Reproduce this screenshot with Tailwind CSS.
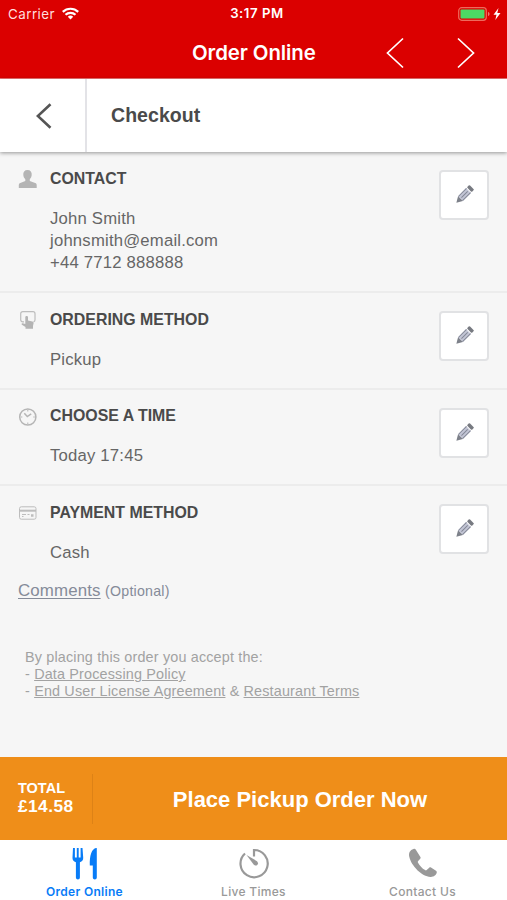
<!DOCTYPE html>
<html lang="en">
<head>
<meta charset="utf-8">
<title>Checkout</title>
<script src="https://cdn.jsdelivr.net/npm/@tailwindcss/browser@4"></script>
</head>
<body class="w-[507px] h-[900px] overflow-hidden bg-[#f6f6f6] font-['Liberation_Sans',Arial,sans-serif] text-[#666] whitespace-nowrap">
<svg class="hidden">
  <symbol id="pencil" viewBox="0 0 20 20">
    <g transform="rotate(45 10 10)">
      <rect x="6.6" y="-1" width="6.8" height="3.6" rx="1" fill="#777a81"/>
      <path d="M6.6 3.6h6.800v11.400H6.600z" fill="#c3c6d6"/>
      <path d="M7.100 3.600v11.400M12.900 3.600v11.400M10 4.800v8.800" stroke="#858997" stroke-width="1" fill="none"/>
      <path d="M6.600 15h6.800L10 20.800z" fill="#7d818a"/>
    </g>
  </symbol>
</svg>
<div class="flex flex-col h-[900px]">
  <header class="h-[79px] bg-[#db0000] text-white font-[Inter,sans-serif] border-b border-[#ef7272] shrink-0">
    <div class="h-[27px] grid grid-cols-3 items-center px-[8px] text-[13px]">
      <div class="flex items-center gap-[7px] text-[#ffdede]"><span class="text-[13.4px] tracking-[0.450px] pt-[1px]">Carrier</span>
        <svg width="17" height="13" viewBox="0 0 17 13" fill="none" stroke="#fff" stroke-width="2.2"><path d="M.8 4.900a11 11 0 0 1 15.400 0M3.500 7.800a7.200 7.200 0 0 1 10 0"/><path d="M8.500 12.500L5.800 9.700a4 4 0 0 1 5.400 0z" fill="#fff" stroke="none"/></svg>
      </div>
      <div class="text-center font-semibold text-[13.200px] tracking-[0.550px] pl-[7px] pt-[1px]">3:17 PM</div>
      <div class="flex justify-end items-center -mr-[3px]">
        <svg width="44" height="16" viewBox="0 0 44 16"><rect x=".7" y="1.700" width="27.600" height="12.600" rx="3" fill="none" stroke="#ee6a5c" stroke-width="1.200"/><rect x="2.500" y="3.500" width="24" height="9" rx="1" fill="#4cd964"/><path d="M30 6c2 .5 2 3.500 0 4z" fill="#ee7777"/><path d="M40.500 2L35.500 8.700h3l-1.200 5.300 5.200-7.100h-3.200z" fill="#fff"/></svg>
      </div>
    </div>
    <div class="h-[51px] flex items-center">
      <h1 class="ml-[192px] w-[194px] text-[20.400px] font-semibold tracking-[-0.080px] pt-[1px]">Order Online</h1>
      <svg width="90" height="32" viewBox="0 0 90 32" fill="none" stroke="#fff" stroke-width="1.700"><path d="M17 1.500L1.500 16 17 30.500M72 1.500L87.500 16 72 30.500"/></svg>
    </div>
  </header>

  <div class="h-[73px] bg-white flex items-center shadow-[0_1px_4px_rgba(0,0,0,.4)] shrink-0">
    <div class="w-[87px] h-full border-r-2 border-[#e3e3e7] flex items-center pl-[36px]">
      <svg width="16" height="26" viewBox="0 0 16 26" fill="none" stroke="#555" stroke-width="2.600"><path d="M14.500 1.200L1.800 13l12.700 11.800"/></svg>
    </div>
    <h2 class="pl-[24px] text-[19.500px] font-bold text-[#4a4a4a] tracking-[0.050px]">Checkout</h2>
  </div>

  <section class="h-[141px] flex border-b-2 border-[#ececec] pl-[18px] pr-[18px] pt-[18px] shrink-0">
    <svg class="w-[19px] h-[18px] shrink-0" viewBox="0 0 19 18" fill="#b4b4b4"><path d="M9.500 0c3 0 4.500 2 4.200 5-.2 1.800-.9 3.200-1.900 4.200v1.700l5.400 2c1 .4 1.500 1 1.500 2.300V18H.8v-2.800c0-1.300.5-1.900 1.500-2.300l5-2V9.200C6.200 8.200 5.500 6.800 5.300 5 5 2 6.500 0 9.500 0z"/></svg>
    <div class="pl-[13px] flex-1">
      <h3 class="text-[15.900px] leading-[18px] font-bold text-[#4a4a4a]">CONTACT</h3>
      <p class="mt-[20px] text-[16.700px] leading-[22px] tracking-[0.200px]">John Smith<br>johnsmith@email.com<br>+44 7712 888888</p>
    </div>
    <button class="w-[50px] h-[50px] rounded-[4px] border-2 border-[#e1e2e4] bg-white flex items-center justify-center"><svg class="w-[20px] h-[20px]"><use href="#pencil"/></svg></button>
  </section>

  <section class="h-[97px] flex border-b-2 border-[#ececec] pl-[18px] pr-[18px] pt-[18px] shrink-0">
    <svg class="w-[19px] h-[18px] shrink-0" viewBox="0 0 19 18"><path d="M6 10.800H4.700A2 2 0 0 1 2.700 8.800V2.700A2 2 0 0 1 4.700.7H15a2 2 0 0 1 2 2V8.800a2 2 0 0 1-1.500 2" fill="none" stroke="#bdbdbd" stroke-width="1.200"/><path d="M7.300 6.200c0-1.700 2.700-1.700 2.700 0v3.200l4.300 1c1 .3 1.400.9 1.300 1.900L15 15v2.700H7.500V16l-3.600-2.200c-.8-.8-.1-1.700.8-1.500l2.600.600z" fill="#b4b4b4"/></svg>
    <div class="pl-[13px] flex-1">
      <h3 class="text-[15.900px] leading-[18px] font-bold text-[#4a4a4a]">ORDERING METHOD</h3>
      <p class="mt-[20px] text-[16.700px] leading-[22px] tracking-[0.200px]">Pickup</p>
    </div>
    <button class="w-[50px] h-[50px] rounded-[4px] border-2 border-[#e1e2e4] bg-white flex items-center justify-center"><svg class="w-[20px] h-[20px]"><use href="#pencil"/></svg></button>
  </section>

  <section class="h-[96px] flex border-b-2 border-[#ececec] pl-[18px] pr-[18px] pt-[17px] shrink-0">
    <svg class="w-[19px] h-[18px] mt-[1px] shrink-0" viewBox="0 0 19 18" fill="none" stroke="#b5b5b5"><circle cx="9.800" cy="9" r="8.100" stroke-width="1.500"/><path d="M6.300 5.300L9.300 8.500l3.900-2.700" stroke-width="1.500"/><path d="M9.800 2v1.500M9.800 14.500V16M2.800 9h1.500M15.300 9h1.500" stroke-width="1"/></svg>
    <div class="pl-[13px] flex-1">
      <h3 class="text-[15.900px] leading-[18px] font-bold text-[#4a4a4a]">CHOOSE A TIME</h3>
      <p class="mt-[20px] text-[16.700px] leading-[22px] tracking-[0.200px]">Today 17:45</p>
    </div>
    <button class="w-[50px] h-[50px] mt-[1px] rounded-[4px] border-2 border-[#e1e2e4] bg-white flex items-center justify-center"><svg class="w-[20px] h-[20px]"><use href="#pencil"/></svg></button>
  </section>

  <section class="h-[93px] flex pl-[18px] pr-[18px] pt-[18px] shrink-0">
    <svg class="w-[19px] h-[18px] shrink-0" viewBox="0 0 19 18" fill="none" stroke="#bdbdbd"><rect x="1.500" y="2.800" width="16.500" height="12.400" rx="1.800"/><path d="M1.500 6.700H18" stroke-width="2"/><path d="M4 10.500h4M4 12.500h1.500M9.500 10.500h2" stroke-width="1"/><path d="M13 11.500h2.500" stroke-width="2.500"/></svg>
    <div class="pl-[13px] flex-1">
      <h3 class="text-[15.900px] leading-[18px] font-bold text-[#4a4a4a]">PAYMENT METHOD</h3>
      <p class="mt-[20px] text-[16.700px] leading-[22px] tracking-[0.200px]">Cash</p>
    </div>
    <button class="w-[50px] h-[50px] rounded-[4px] border-2 border-[#e1e2e4] bg-white flex items-center justify-center"><svg class="w-[20px] h-[20px]"><use href="#pencil"/></svg></button>
  </section>

  <div class="pl-[18px] h-[24px] leading-[24px] text-[#858b99] shrink-0"><a class="underline underline-offset-2 text-[16.900px] tracking-[0.120px]">Comments</a> <span class="text-[14.200px] tracking-[0.220px]">(Optional)</span></div>

  <div class="flex-1 pl-[25px] pt-[46px] text-[14.400px] tracking-[0.160px] leading-[17px] text-[#a2a2a2]">
    By placing this order you accept the:<br>- <a class="underline">Data Processing Policy</a><br>- <a class="underline">End User License Agreement</a> &amp; <a class="underline">Restaurant Terms</a>
  </div>

  <div class="h-[83px] bg-[#ef8e19] text-white font-bold flex items-center shrink-0">
    <div class="w-[93px] h-[50px] pl-[18px] border-r border-[#dd8216] flex flex-col justify-center">
      <div class="text-[14.500px] leading-[18px] -mt-[2px]">TOTAL</div>
      <div class="text-[17.300px] tracking-[0.450px] leading-[19px]">£14.58</div>
    </div>
    <div class="flex-1 text-center text-[22px] pt-[2px]">Place Pickup Order Now</div>
  </div>

  <nav class="h-[60px] bg-white grid grid-cols-3 text-[#999] font-[Inter,sans-serif] text-[12px] font-medium tracking-[0.300px] shrink-0">
    <div class="flex flex-col items-center text-[#087cf7] font-semibold">
      <svg class="mt-[7px]" width="28" height="33" viewBox="0 0 28 33" fill="#087cf7"><path d="M2 1h1.900v9.500h1.900V1h1.900v9.500h1.900V1h1.900l.7 9.500c.2 2.500-1 4-3.300 4.700V30.500c0 2.500-4 2.500-4 0V15.200C2.600 14.500 1.300 13 1.500 10.500zM25.800 1v29.500c0 2.500-4 2.500-4 0V18.500h-3C18.500 9 20.500 1 25.800 1z"/></svg>
      <span class="leading-[15px] mt-[4px]">Order Online</span>
    </div>
    <div class="flex flex-col items-center">
      <svg class="mt-[7px]" width="32" height="33" viewBox="0 0 32 33" fill="none" stroke="#999" stroke-width="2.200"><path d="M7 6.500A13.600 13.600 0 1 0 16 3v6.500"/><path d="M8.500 8l10.500 6.200c2.600 2.600-.8 6-3.400 3.400z" fill="#999" stroke="none"/></svg>
      <span class="leading-[15px] mt-[4px]">Live Times</span>
    </div>
    <div class="flex flex-col items-center">
      <svg class="mt-[7px]" width="30" height="33" viewBox="0 0 30 33" fill="#999"><path d="M5.500 2C2 3 .5 6 1.200 9.500 3.200 19 14 29.500 22.500 30c3 .2 6-2 6.300-4.700.1-.7-.2-1.200-.8-1.600l-5-3.200c-.7-.4-1.300-.3-1.800.2l-2.500 2.300c-.5.500-1 .5-1.600.1-3-1.900-5.500-4.600-7.200-7.700-.3-.6-.2-1.100.3-1.500L12 12c.7-.6.8-1.200.4-1.900L8 2.900C7.400 1.900 6.500 1.600 5.500 2z"/></svg>
      <span class="leading-[15px] mt-[4px]">Contact Us</span>
    </div>
  </nav>
</div>
</body>
</html>
